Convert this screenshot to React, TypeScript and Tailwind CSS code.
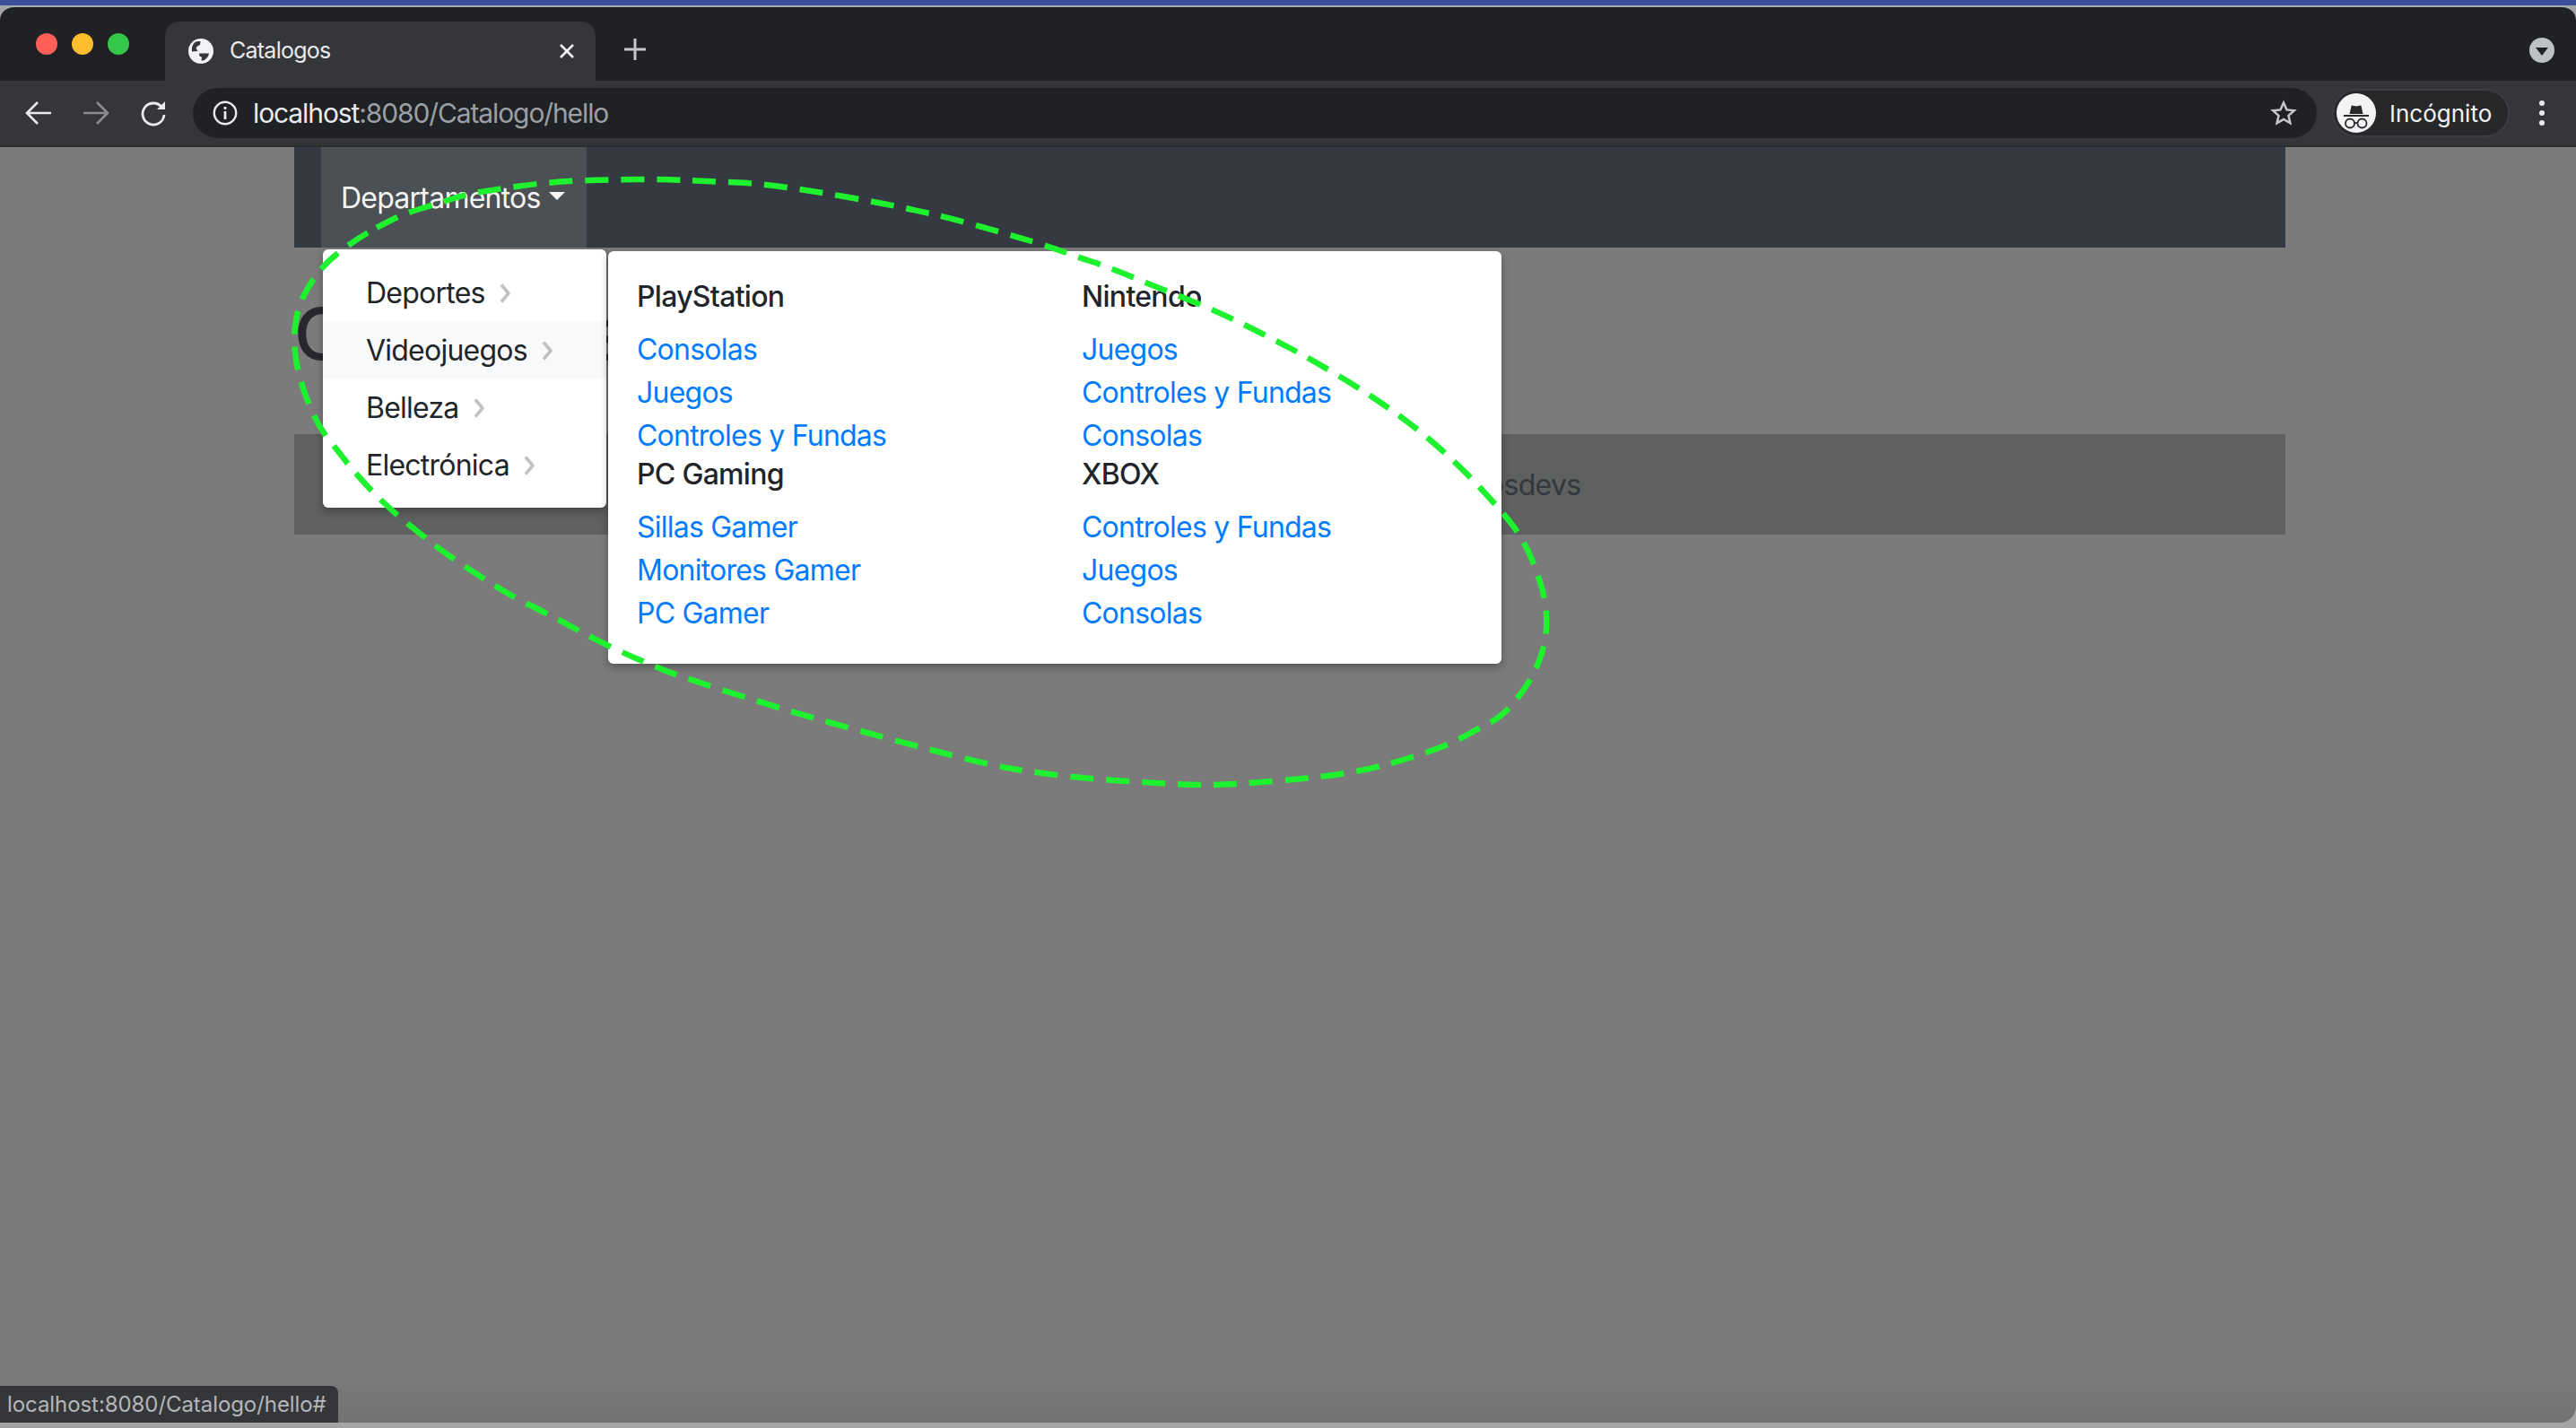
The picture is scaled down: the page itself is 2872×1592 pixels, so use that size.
import React from "react";

const uiFont = "font-['Inter',sans-serif]";

interface Group {
  title: string;
  links: string[];
}

const categories = ["Deportes", "Videojuegos", "Belleza", "Electrónica"];

const leftGroups: Group[] = [
  { title: "PlayStation", links: ["Consolas", "Juegos", "Controles y Fundas"] },
  { title: "PC Gaming", links: ["Sillas Gamer", "Monitores Gamer", "PC Gamer"] },
];

const rightGroups: Group[] = [
  { title: "Nintendo", links: ["Juegos", "Controles y Fundas", "Consolas"] },
  { title: "XBOX", links: ["Controles y Fundas", "Juegos", "Consolas"] },
];

const ringPoints: [number, number][] = [
  [397, 267], [366, 290], [346, 315], [332, 343], [327, 377], [331, 410], [341, 443], [356, 477],
  [377, 503], [394, 525], [417, 550], [440, 572], [466, 593], [491, 613], [519, 632], [547, 650],
  [575, 667], [606, 682], [634, 697], [662, 712], [693, 727], [723, 740], [752, 752], [879, 793],
  [1026, 833], [1100, 852], [1158, 862], [1225, 869], [1292, 873], [1328, 875], [1359, 875], [1395, 873],
  [1453, 868], [1488, 864], [1524, 858], [1555, 850], [1587, 840], [1618, 829], [1647, 813], [1674, 799],
  [1696, 774], [1712, 748], [1723, 717], [1725, 684], [1718, 648], [1698, 600], [1671, 566], [1627, 519],
  [1578, 476], [1524, 438], [1466, 403], [1408, 372], [1350, 344], [1287, 319], [1234, 297], [1203, 287],
  [1167, 274], [1127, 262], [1026, 234], [861, 205], [786, 202], [745, 200], [679, 200], [612, 203],
  [546, 212], [515, 218], [485, 228], [451, 238], [423, 252],
];

function smoothRing(points: [number, number][]): string {
  const mid = (a: [number, number], b: [number, number]) => `${(a[0] + b[0]) / 2} ${(a[1] + b[1]) / 2}`;
  let d = `M${mid(points[points.length - 1], points[0])}`;
  points.forEach((p, i) => {
    d += ` Q${p[0]} ${p[1]} ${mid(p, points[(i + 1) % points.length])}`;
  });
  return d + " Z";
}

const GroupList: React.FC<{ group: Group }> = ({ group }) => (
  <div>
    <h6 className="text-[32px] leading-[38px] font-medium text-[#212529] mb-4 tracking-[-0.022em]">{group.title}</h6>
    {group.links.map((link, i) => (
      <a key={i} href="#" className="block h-12 leading-[48px] text-[32px] text-[#007bff] tracking-[-0.024em]">
        {link}
      </a>
    ))}
  </div>
);

const Chevron = () => (
  <svg width="13" height="22" viewBox="0 0 13 22" fill="none" className="ml-4">
    <path d="M2 1.5 L10 11 L2 20.5" stroke="#c0c1c3" strokeWidth="3.5" strokeLinejoin="round" />
  </svg>
);

const Globe = () => (
  <svg width="28" height="28" viewBox="0 0 28 28">
    <circle cx="14" cy="14" r="14" fill="#f1f3f4" />
    <path d="M7 4.2 Q10 2.5 13.5 3 L13 7 Q9.5 8 8.5 10.5 L10.5 14 L4 14.5 Q3.2 8 7 4.2 Z" fill="#35363a" />
    <path d="M12.5 16.5 L23 16.5 Q22.5 21 17 24.5 L14.5 24.5 L15 21 L12 19 Z" fill="#35363a" />
  </svg>
);

const IncognitoIcon = () => (
  <svg width="44" height="44" viewBox="0 0 44 44" fill="none">
    <circle cx="22" cy="22" r="22" fill="#f1f3f4" />
    <path d="M14.5 23 L16.8 13.4 L22 14.4 L27.4 13.4 L29.5 23 Z" fill="#28282b" />
    <rect x="8" y="24" width="28" height="2" fill="#28282b" />
    <circle cx="15" cy="33.5" r="5" stroke="#28282b" strokeWidth="1.8" />
    <circle cx="28.5" cy="33.5" r="5" stroke="#28282b" strokeWidth="1.8" />
    <path d="M20 33 H23.5" stroke="#28282b" strokeWidth="1.8" />
  </svg>
);

const BrowserChrome = () => (
  <div className={`${uiFont} shrink-0`}>
    <div className="h-[84px] bg-[#202124] rounded-t-[16px] flex items-start pl-10 pr-6 border-t-2 border-[#a9adb8]">
      <div className="flex items-center gap-4 w-[144px] h-full">
        <span className="w-6 h-6 rounded-full bg-[#ff5f57]" />
        <span className="w-6 h-6 rounded-full bg-[#febc2e]" />
        <span className="w-6 h-6 rounded-full bg-[#34c749]" />
      </div>
      <div className="mt-4 h-[66px] w-[480px] bg-[#35363a] rounded-t-[16px] flex items-center pl-[26px] pr-[22px]">
        <Globe />
        <span className="ml-[18px] text-[25px] text-[#e8eaed] tracking-[-0.03em] flex-1">Catalogos</span>
        <svg width="20" height="20" viewBox="0 0 20 20">
          <path d="M3 3 L17 17 M17 3 L3 17" stroke="#f1f3f4" strokeWidth="2.6" />
        </svg>
      </div>
      <svg width="26" height="26" viewBox="0 0 26 26" className="ml-[31px] mt-[34px]">
        <path d="M13 1 V25 M1 13 H25" stroke="#c4c6c9" strokeWidth="3" />
      </svg>
      <div className="ml-auto mt-[34px]">
        <div className="w-[28px] h-[28px] rounded-full bg-[#bdc1c6] flex items-center justify-center">
          <span className="w-0 h-0 border-x-[7px] border-x-transparent border-t-[9px] border-t-[#202124] mt-[2px]" />
        </div>
      </div>
    </div>
    <div className="h-[74px] bg-[#35363a] border-b-2 border-[#2a2b2d] flex items-center pl-[28px]">
      <svg width="30" height="28" viewBox="0 0 30 28" fill="none" stroke="#e8eaed" strokeWidth="2.6">
        <path d="M29 14 H3 M14 2 L2 14 L14 26" />
      </svg>
      <svg width="30" height="28" viewBox="0 0 30 28" fill="none" stroke="#8b8c8f" strokeWidth="2.6" className="ml-[34px]">
        <path d="M1 14 H27 M16 2 L28 14 L16 26" />
      </svg>
      <svg width="30" height="30" viewBox="0 0 30 30" fill="none" stroke="#e8eaed" strokeWidth="2.8" className="ml-[34px]">
        <path d="M24 8 A12 12 0 1 0 27 17" />
        <path d="M28 2 V11 H19 Z" fill="#e8eaed" stroke="none" />
      </svg>
      <div className="ml-[29px] w-[2368px] h-14 bg-[#202124] rounded-full flex items-center pl-[22px] pr-[22px]">
        <svg width="28" height="28" viewBox="0 0 28 28" fill="none">
          <circle cx="14" cy="14" r="12.2" stroke="#e8eaed" strokeWidth="2.4" />
          <rect x="12.6" y="12" width="2.8" height="9" fill="#e8eaed" />
          <rect x="12.6" y="7" width="2.8" height="3" fill="#e8eaed" />
        </svg>
        <span className="ml-[17px] text-[30px] tracking-[-0.037em] text-[#e8eaed]">
          localhost<span className="text-[#9aa0a6]">:8080/Catalogo/hello</span>
        </span>
        <svg width="30" height="30" viewBox="0 0 24 24" fill="none" stroke="#c4c6c9" strokeWidth="2" className="ml-auto">
          <path d="M12 2.8 L14.8 9.1 L21.5 9.8 L16.4 14.3 L17.9 21 L12 17.5 L6.1 21 L7.6 14.3 L2.5 9.8 L9.2 9.1 Z" />
        </svg>
      </div>
      <div className="ml-[17px] w-[198px] h-[54px] rounded-full bg-[#28282b] border-2 border-[#3c3d40] flex items-center pl-[3px]">
        <IncognitoIcon />
        <span className="ml-[15px] text-[26px] text-[#f1f3f4]">Incógnito</span>
      </div>
      <div className="ml-[33px] flex flex-col gap-[5px]">
        <span className="w-[6px] h-[6px] rounded-full bg-[#e8eaed]" />
        <span className="w-[6px] h-[6px] rounded-full bg-[#e8eaed]" />
        <span className="w-[6px] h-[6px] rounded-full bg-[#e8eaed]" />
      </div>
    </div>
  </div>
);

export default function App() {
  return (
    <div className={`${uiFont} relative w-[2872px] h-[1592px] overflow-hidden bg-[#a4a4a4] flex flex-col`}>
      <div className="h-[6px] shrink-0 bg-[#3c4f9b]" />
      <BrowserChrome />

      <main className="relative flex-1 bg-gradient-to-b from-[#7b7b7b] via-[#7b7b7b] via-[96%] to-[#727272] rounded-br-[18px] pl-[328px] pr-[324px]">
        <nav className="h-[112px] bg-[#353941] pl-[30px]">
          <button className="h-full w-[296px] bg-[#4b5054] pl-[22px] pt-[2px] flex items-center text-[32px] text-[#f4f4f4] tracking-[-0.024em]">
            Departamentos
            <span className="ml-[9px] mb-[6px] w-0 h-0 border-x-[9px] border-x-transparent border-t-[9px] border-t-[#f4f4f4]" />
          </button>
        </nav>
        <h1 className="mt-[48px] h-[160px] text-[80px] leading-[96px] font-medium text-[#26282b] tracking-[-0.02em]">Catalogos</h1>
        <div className="h-[112px] bg-[#5f6160] flex items-center pl-[1236px] pt-[2px] text-[32px] text-[#34373b] tracking-[-0.02em]">
          @cursosdevs
        </div>

        {/* dropdowns lie over the page */}
        <div className="absolute left-[360px] top-[114px] w-[316px] h-[288px] bg-white rounded-[6px] py-4 shadow-[0_4px_10px_rgba(0,0,0,0.3)]">
          {categories.map((name) => (
            <div
              key={name}
              className={`h-16 pl-[48px] pt-[2px] flex items-center text-[32px] text-[#212529] tracking-[-0.024em] ${
                name === "Videojuegos" ? "bg-[#f8f9fa]" : ""
              }`}
            >
              {name}
              <Chevron />
            </div>
          ))}
        </div>
        <div className="absolute left-[678px] top-[116px] w-[996px] h-[460px] bg-white rounded-[6px] pl-[32px] pt-[32px] grid grid-cols-[496px_1fr] content-start shadow-[0_4px_10px_rgba(0,0,0,0.3)]">
          <div>
            {leftGroups.map((g) => (
              <GroupList key={g.title} group={g} />
            ))}
          </div>
          <div>
            {rightGroups.map((g) => (
              <GroupList key={g.title} group={g} />
            ))}
          </div>
        </div>

        <div className="absolute left-0 bottom-0 w-[377px] h-[41px] bg-[#35363a] rounded-tr-[8px] pl-2 flex items-center text-[24px] text-[#b4b6b9] tracking-[-0.003em]">
          localhost:8080/Catalogo/hello#
        </div>
      </main>
      <div className="h-[6px] shrink-0" />

      {/* hand drawn annotation ring */}
      <svg className="absolute inset-0 pointer-events-none" width="2872" height="1592" fill="none">
        <path d={smoothRing(ringPoints)} stroke="#1ef22e" strokeWidth="6.5" strokeDasharray="26 14" />
      </svg>
    </div>
  );
}
